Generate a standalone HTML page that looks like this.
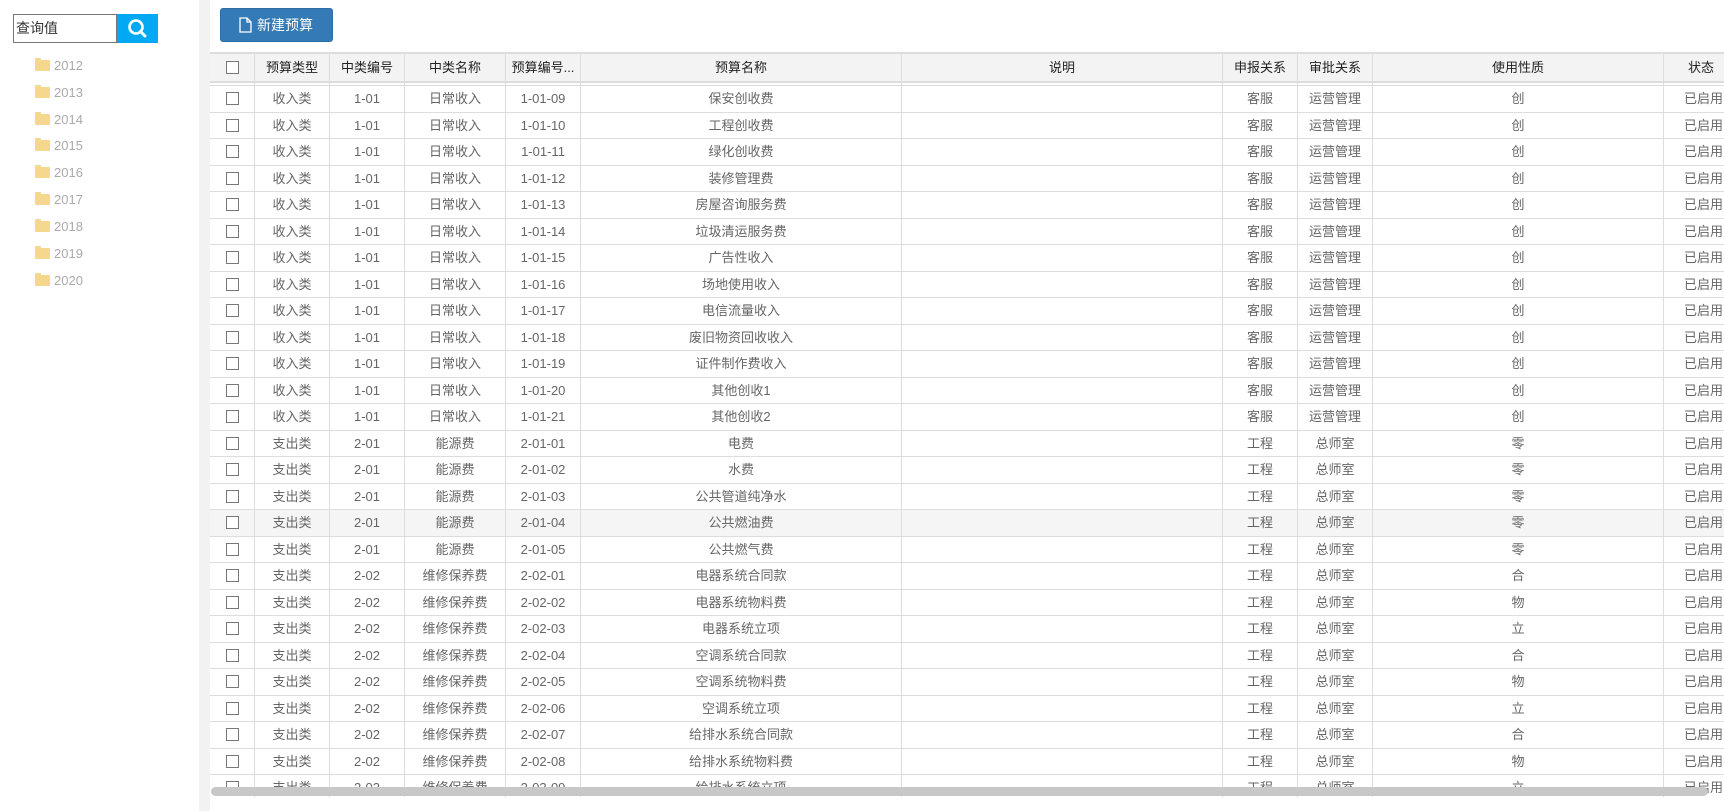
<!DOCTYPE html>
<html><head><meta charset="utf-8"><style>
*{margin:0;padding:0;box-sizing:border-box}
body{width:1724px;height:811px;overflow:hidden;background:#fff;font-family:"Liberation Sans","Noto Sans CJK SC",sans-serif;font-size:13px;color:#666;position:relative}
.side{position:absolute;left:0;top:0;width:199px;height:811px;background:#fff}
.gap{position:absolute;left:199px;top:0;width:11px;height:811px;background:#f2f2f2}
.inp{position:absolute;left:13px;top:14px;width:104px;height:29px;border:1px solid #777;font-size:14px;color:#333;padding:5px 2px;line-height:17px}
.sbtn{position:absolute;left:117px;top:14px;width:41px;height:29px;background:#00a9f1}
.fold{position:absolute;left:35px;font-size:13px;color:#aaa;height:20px;line-height:20px}
.fold i{display:inline-block;width:15px;height:11px;background:#f5d88e;border-radius:1px;margin-right:4px;vertical-align:-1px;position:relative}
.fold i:before{content:"";position:absolute;left:0;top:-2px;width:6px;height:3px;background:#f5d88e;border-radius:1px 1px 0 0}
.btn{position:absolute;left:220px;top:8px;width:113px;height:34px;background:#337ab7;border-radius:3px;border:1px solid #2e6da4;color:#fff;font-size:14px;line-height:32px;padding-left:36px}
.doc{position:absolute;left:18px;top:8px}
.tbl{position:absolute;left:210px;top:52px;width:1514px;height:745px;overflow:hidden;border-top:2px solid #ddd}
.hd{height:29px;background:#f2f3f2;border-bottom:2px solid #ddd;display:flex;color:#222}
.sp{height:3px;border-bottom:1px solid #ddd;display:flex}
.r{height:26.5px;border-bottom:1px solid #ddd;display:flex}
.r.h{background:#f5f5f5}
.c{border-right:1px solid #ddd;text-align:center;line-height:25px;white-space:nowrap;overflow:hidden;flex:none}
.hd .c{line-height:27px}
.w0{width:45px}.w1{width:75px}.w2{width:75px}.w3{width:101px}.w4{width:75px}.w5{width:321px}.w6{width:321px}.w7{width:75px}.w8{width:75px}.w9{width:291px}.w10{width:100px;border-right:none;text-align:left;padding-left:20px}
.cb{display:inline-block;width:13px;height:13px;border:1px solid #777;vertical-align:-2px;background:#fff}
.scr{position:absolute;left:211px;top:787px;width:1497px;height:9px;background:#c8c8c8;border-radius:5px}
</style></head><body>
<div class="side">
<div class="inp">查询值</div>
<div class="sbtn"><svg width="41" height="29"><circle cx="19" cy="13" r="6.5" fill="none" stroke="#fff" stroke-width="2.6"/><line x1="23.5" y1="17.5" x2="28" y2="22" stroke="#fff" stroke-width="3" stroke-linecap="round"/></svg></div>
<div class="fold" style="top:56px"><i></i>2012</div>
<div class="fold" style="top:83px"><i></i>2013</div>
<div class="fold" style="top:110px"><i></i>2014</div>
<div class="fold" style="top:136px"><i></i>2015</div>
<div class="fold" style="top:163px"><i></i>2016</div>
<div class="fold" style="top:190px"><i></i>2017</div>
<div class="fold" style="top:217px"><i></i>2018</div>
<div class="fold" style="top:244px"><i></i>2019</div>
<div class="fold" style="top:271px"><i></i>2020</div>
</div>
<div class="gap"></div>
<div class="btn"><svg class="doc" width="13" height="16"><path d="M1 1H8L12 5V15H1Z M8 1V5H12" fill="none" stroke="#fff" stroke-width="1.3"/></svg>新建预算</div>
<div class="tbl">
<div class="hd"><div class="c w0"><span class="cb"></span></div><div class="c w1">预算类型</div><div class="c w2">中类编号</div><div class="c w3">中类名称</div><div class="c w4">预算编号...</div><div class="c w5">预算名称</div><div class="c w6">说明</div><div class="c w7">申报关系</div><div class="c w8">审批关系</div><div class="c w9">使用性质</div><div class="c w10" style="padding-left:24px">状态</div></div>
<div class="sp"><div class="c w0"></div><div class="c w1"></div><div class="c w2"></div><div class="c w3"></div><div class="c w4"></div><div class="c w5"></div><div class="c w6"></div><div class="c w7"></div><div class="c w8"></div><div class="c w9"></div></div>
<div class="r"><div class="c w0"><span class="cb"></span></div><div class="c w1">收入类</div><div class="c w2">1-01</div><div class="c w3">日常收入</div><div class="c w4">1-01-09</div><div class="c w5">保安创收费</div><div class="c w6"></div><div class="c w7">客服</div><div class="c w8">运营管理</div><div class="c w9">创</div><div class="c w10">已启用</div></div>
<div class="r"><div class="c w0"><span class="cb"></span></div><div class="c w1">收入类</div><div class="c w2">1-01</div><div class="c w3">日常收入</div><div class="c w4">1-01-10</div><div class="c w5">工程创收费</div><div class="c w6"></div><div class="c w7">客服</div><div class="c w8">运营管理</div><div class="c w9">创</div><div class="c w10">已启用</div></div>
<div class="r"><div class="c w0"><span class="cb"></span></div><div class="c w1">收入类</div><div class="c w2">1-01</div><div class="c w3">日常收入</div><div class="c w4">1-01-11</div><div class="c w5">绿化创收费</div><div class="c w6"></div><div class="c w7">客服</div><div class="c w8">运营管理</div><div class="c w9">创</div><div class="c w10">已启用</div></div>
<div class="r"><div class="c w0"><span class="cb"></span></div><div class="c w1">收入类</div><div class="c w2">1-01</div><div class="c w3">日常收入</div><div class="c w4">1-01-12</div><div class="c w5">装修管理费</div><div class="c w6"></div><div class="c w7">客服</div><div class="c w8">运营管理</div><div class="c w9">创</div><div class="c w10">已启用</div></div>
<div class="r"><div class="c w0"><span class="cb"></span></div><div class="c w1">收入类</div><div class="c w2">1-01</div><div class="c w3">日常收入</div><div class="c w4">1-01-13</div><div class="c w5">房屋咨询服务费</div><div class="c w6"></div><div class="c w7">客服</div><div class="c w8">运营管理</div><div class="c w9">创</div><div class="c w10">已启用</div></div>
<div class="r"><div class="c w0"><span class="cb"></span></div><div class="c w1">收入类</div><div class="c w2">1-01</div><div class="c w3">日常收入</div><div class="c w4">1-01-14</div><div class="c w5">垃圾清运服务费</div><div class="c w6"></div><div class="c w7">客服</div><div class="c w8">运营管理</div><div class="c w9">创</div><div class="c w10">已启用</div></div>
<div class="r"><div class="c w0"><span class="cb"></span></div><div class="c w1">收入类</div><div class="c w2">1-01</div><div class="c w3">日常收入</div><div class="c w4">1-01-15</div><div class="c w5">广告性收入</div><div class="c w6"></div><div class="c w7">客服</div><div class="c w8">运营管理</div><div class="c w9">创</div><div class="c w10">已启用</div></div>
<div class="r"><div class="c w0"><span class="cb"></span></div><div class="c w1">收入类</div><div class="c w2">1-01</div><div class="c w3">日常收入</div><div class="c w4">1-01-16</div><div class="c w5">场地使用收入</div><div class="c w6"></div><div class="c w7">客服</div><div class="c w8">运营管理</div><div class="c w9">创</div><div class="c w10">已启用</div></div>
<div class="r"><div class="c w0"><span class="cb"></span></div><div class="c w1">收入类</div><div class="c w2">1-01</div><div class="c w3">日常收入</div><div class="c w4">1-01-17</div><div class="c w5">电信流量收入</div><div class="c w6"></div><div class="c w7">客服</div><div class="c w8">运营管理</div><div class="c w9">创</div><div class="c w10">已启用</div></div>
<div class="r"><div class="c w0"><span class="cb"></span></div><div class="c w1">收入类</div><div class="c w2">1-01</div><div class="c w3">日常收入</div><div class="c w4">1-01-18</div><div class="c w5">废旧物资回收收入</div><div class="c w6"></div><div class="c w7">客服</div><div class="c w8">运营管理</div><div class="c w9">创</div><div class="c w10">已启用</div></div>
<div class="r"><div class="c w0"><span class="cb"></span></div><div class="c w1">收入类</div><div class="c w2">1-01</div><div class="c w3">日常收入</div><div class="c w4">1-01-19</div><div class="c w5">证件制作费收入</div><div class="c w6"></div><div class="c w7">客服</div><div class="c w8">运营管理</div><div class="c w9">创</div><div class="c w10">已启用</div></div>
<div class="r"><div class="c w0"><span class="cb"></span></div><div class="c w1">收入类</div><div class="c w2">1-01</div><div class="c w3">日常收入</div><div class="c w4">1-01-20</div><div class="c w5">其他创收1</div><div class="c w6"></div><div class="c w7">客服</div><div class="c w8">运营管理</div><div class="c w9">创</div><div class="c w10">已启用</div></div>
<div class="r"><div class="c w0"><span class="cb"></span></div><div class="c w1">收入类</div><div class="c w2">1-01</div><div class="c w3">日常收入</div><div class="c w4">1-01-21</div><div class="c w5">其他创收2</div><div class="c w6"></div><div class="c w7">客服</div><div class="c w8">运营管理</div><div class="c w9">创</div><div class="c w10">已启用</div></div>
<div class="r"><div class="c w0"><span class="cb"></span></div><div class="c w1">支出类</div><div class="c w2">2-01</div><div class="c w3">能源费</div><div class="c w4">2-01-01</div><div class="c w5">电费</div><div class="c w6"></div><div class="c w7">工程</div><div class="c w8">总师室</div><div class="c w9">零</div><div class="c w10">已启用</div></div>
<div class="r"><div class="c w0"><span class="cb"></span></div><div class="c w1">支出类</div><div class="c w2">2-01</div><div class="c w3">能源费</div><div class="c w4">2-01-02</div><div class="c w5">水费</div><div class="c w6"></div><div class="c w7">工程</div><div class="c w8">总师室</div><div class="c w9">零</div><div class="c w10">已启用</div></div>
<div class="r"><div class="c w0"><span class="cb"></span></div><div class="c w1">支出类</div><div class="c w2">2-01</div><div class="c w3">能源费</div><div class="c w4">2-01-03</div><div class="c w5">公共管道纯净水</div><div class="c w6"></div><div class="c w7">工程</div><div class="c w8">总师室</div><div class="c w9">零</div><div class="c w10">已启用</div></div>
<div class="r h"><div class="c w0"><span class="cb"></span></div><div class="c w1">支出类</div><div class="c w2">2-01</div><div class="c w3">能源费</div><div class="c w4">2-01-04</div><div class="c w5">公共燃油费</div><div class="c w6"></div><div class="c w7">工程</div><div class="c w8">总师室</div><div class="c w9">零</div><div class="c w10">已启用</div></div>
<div class="r"><div class="c w0"><span class="cb"></span></div><div class="c w1">支出类</div><div class="c w2">2-01</div><div class="c w3">能源费</div><div class="c w4">2-01-05</div><div class="c w5">公共燃气费</div><div class="c w6"></div><div class="c w7">工程</div><div class="c w8">总师室</div><div class="c w9">零</div><div class="c w10">已启用</div></div>
<div class="r"><div class="c w0"><span class="cb"></span></div><div class="c w1">支出类</div><div class="c w2">2-02</div><div class="c w3">维修保养费</div><div class="c w4">2-02-01</div><div class="c w5">电器系统合同款</div><div class="c w6"></div><div class="c w7">工程</div><div class="c w8">总师室</div><div class="c w9">合</div><div class="c w10">已启用</div></div>
<div class="r"><div class="c w0"><span class="cb"></span></div><div class="c w1">支出类</div><div class="c w2">2-02</div><div class="c w3">维修保养费</div><div class="c w4">2-02-02</div><div class="c w5">电器系统物料费</div><div class="c w6"></div><div class="c w7">工程</div><div class="c w8">总师室</div><div class="c w9">物</div><div class="c w10">已启用</div></div>
<div class="r"><div class="c w0"><span class="cb"></span></div><div class="c w1">支出类</div><div class="c w2">2-02</div><div class="c w3">维修保养费</div><div class="c w4">2-02-03</div><div class="c w5">电器系统立项</div><div class="c w6"></div><div class="c w7">工程</div><div class="c w8">总师室</div><div class="c w9">立</div><div class="c w10">已启用</div></div>
<div class="r"><div class="c w0"><span class="cb"></span></div><div class="c w1">支出类</div><div class="c w2">2-02</div><div class="c w3">维修保养费</div><div class="c w4">2-02-04</div><div class="c w5">空调系统合同款</div><div class="c w6"></div><div class="c w7">工程</div><div class="c w8">总师室</div><div class="c w9">合</div><div class="c w10">已启用</div></div>
<div class="r"><div class="c w0"><span class="cb"></span></div><div class="c w1">支出类</div><div class="c w2">2-02</div><div class="c w3">维修保养费</div><div class="c w4">2-02-05</div><div class="c w5">空调系统物料费</div><div class="c w6"></div><div class="c w7">工程</div><div class="c w8">总师室</div><div class="c w9">物</div><div class="c w10">已启用</div></div>
<div class="r"><div class="c w0"><span class="cb"></span></div><div class="c w1">支出类</div><div class="c w2">2-02</div><div class="c w3">维修保养费</div><div class="c w4">2-02-06</div><div class="c w5">空调系统立项</div><div class="c w6"></div><div class="c w7">工程</div><div class="c w8">总师室</div><div class="c w9">立</div><div class="c w10">已启用</div></div>
<div class="r"><div class="c w0"><span class="cb"></span></div><div class="c w1">支出类</div><div class="c w2">2-02</div><div class="c w3">维修保养费</div><div class="c w4">2-02-07</div><div class="c w5">给排水系统合同款</div><div class="c w6"></div><div class="c w7">工程</div><div class="c w8">总师室</div><div class="c w9">合</div><div class="c w10">已启用</div></div>
<div class="r"><div class="c w0"><span class="cb"></span></div><div class="c w1">支出类</div><div class="c w2">2-02</div><div class="c w3">维修保养费</div><div class="c w4">2-02-08</div><div class="c w5">给排水系统物料费</div><div class="c w6"></div><div class="c w7">工程</div><div class="c w8">总师室</div><div class="c w9">物</div><div class="c w10">已启用</div></div>
<div class="r"><div class="c w0"><span class="cb"></span></div><div class="c w1">支出类</div><div class="c w2">2-02</div><div class="c w3">维修保养费</div><div class="c w4">2-02-09</div><div class="c w5">给排水系统立项</div><div class="c w6"></div><div class="c w7">工程</div><div class="c w8">总师室</div><div class="c w9">立</div><div class="c w10">已启用</div></div>
</div>
<div class="scr"></div>
</body></html>
